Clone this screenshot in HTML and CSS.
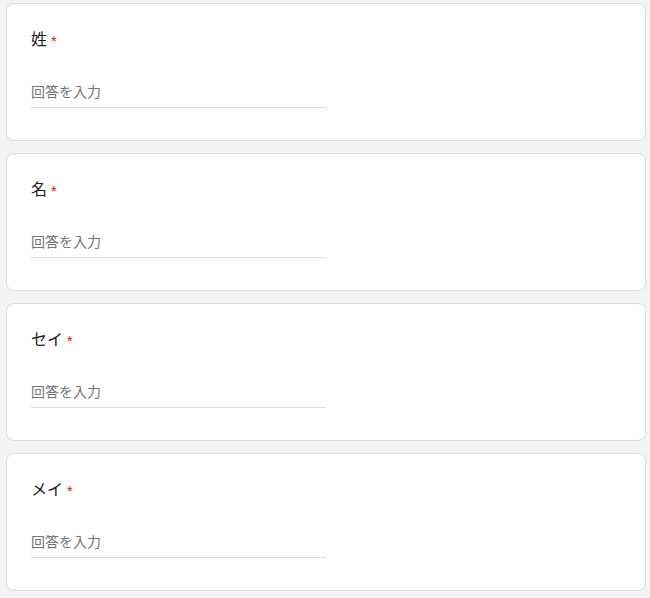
FILE: index.html
```html
<!DOCTYPE html>
<html lang="ja">
<head>
<meta charset="utf-8">
<title>Form</title>
<link rel="stylesheet" href="styles.css">
</head>
<body>
<div class="page">
  <div class="card">
    <div class="label">姓<span class="req">*</span></div>
    <div class="input">回答を入力</div>
  </div>
  <div class="card">
    <div class="label">名<span class="req">*</span></div>
    <div class="input">回答を入力</div>
  </div>
  <div class="card">
    <div class="label">セイ<span class="req">*</span></div>
    <div class="input">回答を入力</div>
  </div>
  <div class="card">
    <div class="label">メイ<span class="req">*</span></div>
    <div class="input">回答を入力</div>
  </div>
</div>
</body>
</html>
```
FILE: styles.css
```css
html, body {
  margin: 0;
  padding: 0;
  background: #f3f3f3;
  font-family: Roboto, "Noto Sans CJK JP", sans-serif;
}
.page {
  display: flex;
  flex-direction: column;
  gap: 12px;
  padding: 3px 4px 0 6px;
  width: 640px;
}
.card {
  background: #ffffff;
  border: 1px solid #dadce0;
  border-radius: 8px;
  padding: 24px 24px 32px 24px;
  height: 80px;
}
.label {
  font-size: 16px;
  line-height: 24px;
  height: 24px;
  color: #202124;
}
.req {
  color: #d93025;
  font-size: 13px;
  margin-left: 4px;
}
.input {
  margin-top: 30px;
  width: 295px;
  font-size: 14px;
  line-height: 20px;
  height: 20px;
  color: #70757a;
  padding-bottom: 5px;
  border-bottom: 1px solid #dadce0;
}
```
